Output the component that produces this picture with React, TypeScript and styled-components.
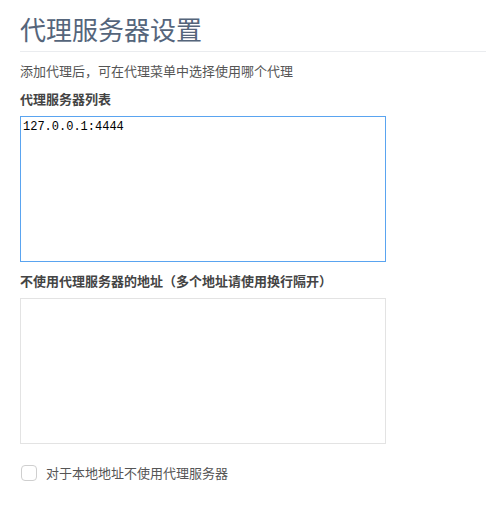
import React, { useState } from "react";
import styled, { createGlobalStyle } from "styled-components";

const GlobalStyle = createGlobalStyle`
  html, body {
    margin: 0;
    padding: 0;
    background: #ffffff;
  }
  body {
    font-family: "Noto Sans CJK SC", "Noto Sans", sans-serif;
    color: #555555;
  }
`;

const App = () => {
  const [proxies, setProxies] = useState("127.0.0.1:4444");
  const [bypass, setBypass] = useState("");
  const [local, setLocal] = useState(false);

  return (
    <>
      <GlobalStyle />
      <Root>
        <Title>代理服务器设置</Title>
        <Description>添加代理后，可在代理菜单中选择使用哪个代理</Description>

        <Field>
          <Label>代理服务器列表</Label>
          <TextBox
            $active
            value={proxies}
            onChange={(e) => setProxies(e.target.value)}
          />
        </Field>

        <Field $gap={9}>
          <Label>不使用代理服务器的地址（多个地址请使用换行隔开）</Label>
          <TextBox value={bypass} onChange={(e) => setBypass(e.target.value)} />
        </Field>

        <CheckRow>
          <CheckBox
            type="checkbox"
            checked={local}
            onChange={(e) => setLocal(e.target.checked)}
          />
          <span>对于本地地址不使用代理服务器</span>
        </CheckRow>
      </Root>
    </>
  );
};

const Root = styled.div`
  padding: 12px 0 0 20px;
  display: flex;
  flex-direction: column;
`;

const Title = styled.h1`
  margin: 0;
  font-size: 26px;
  font-weight: 400;
  line-height: 34px;
  color: #55657b;
  padding-bottom: 5px;
  border-bottom: 1px solid #eaecef;
`;

const Description = styled.p`
  margin: 9px 0 0;
  font-size: 13px;
  line-height: 20px;
  color: #555555;
`;

const Field = styled.div<{ $gap?: number }>`
  display: flex;
  flex-direction: column;
  margin-top: ${({ $gap }) => $gap ?? 8}px;
`;

const Label = styled.label`
  font-size: 13px;
  font-weight: 700;
  line-height: 20px;
  color: #444444;
  margin-bottom: 7px;
`;

const TextBox = styled.textarea<{ $active?: boolean }>`
  box-sizing: border-box;
  width: 366px;
  height: 146px;
  resize: none;
  outline: none;
  margin: 0;
  padding: 3px 2px;
  font-family: "Liberation Mono", "DejaVu Sans Mono", monospace;
  font-size: 12px;
  line-height: 14px;
  color: #000000;
  background: #ffffff;
  border: 1px solid ${({ $active }) => ($active ? "#5aa4f0" : "#e3e3e3")};
  border-radius: 0;
`;

const CheckRow = styled.label`
  display: flex;
  align-items: center;
  gap: 9px;
  margin-top: 20px;
  font-size: 13px;
  line-height: 18px;
  color: #555555;
`;

const CheckBox = styled.input`
  appearance: none;
  margin: 0 0 0 1px;
  width: 16px;
  height: 16px;
  border: 1px solid #cfcfcf;
  border-radius: 4px;
  background: #ffffff;
  box-sizing: border-box;

  &:checked {
    background: #5aa4f0;
    border-color: #5aa4f0;
  }
`;

export default App;
